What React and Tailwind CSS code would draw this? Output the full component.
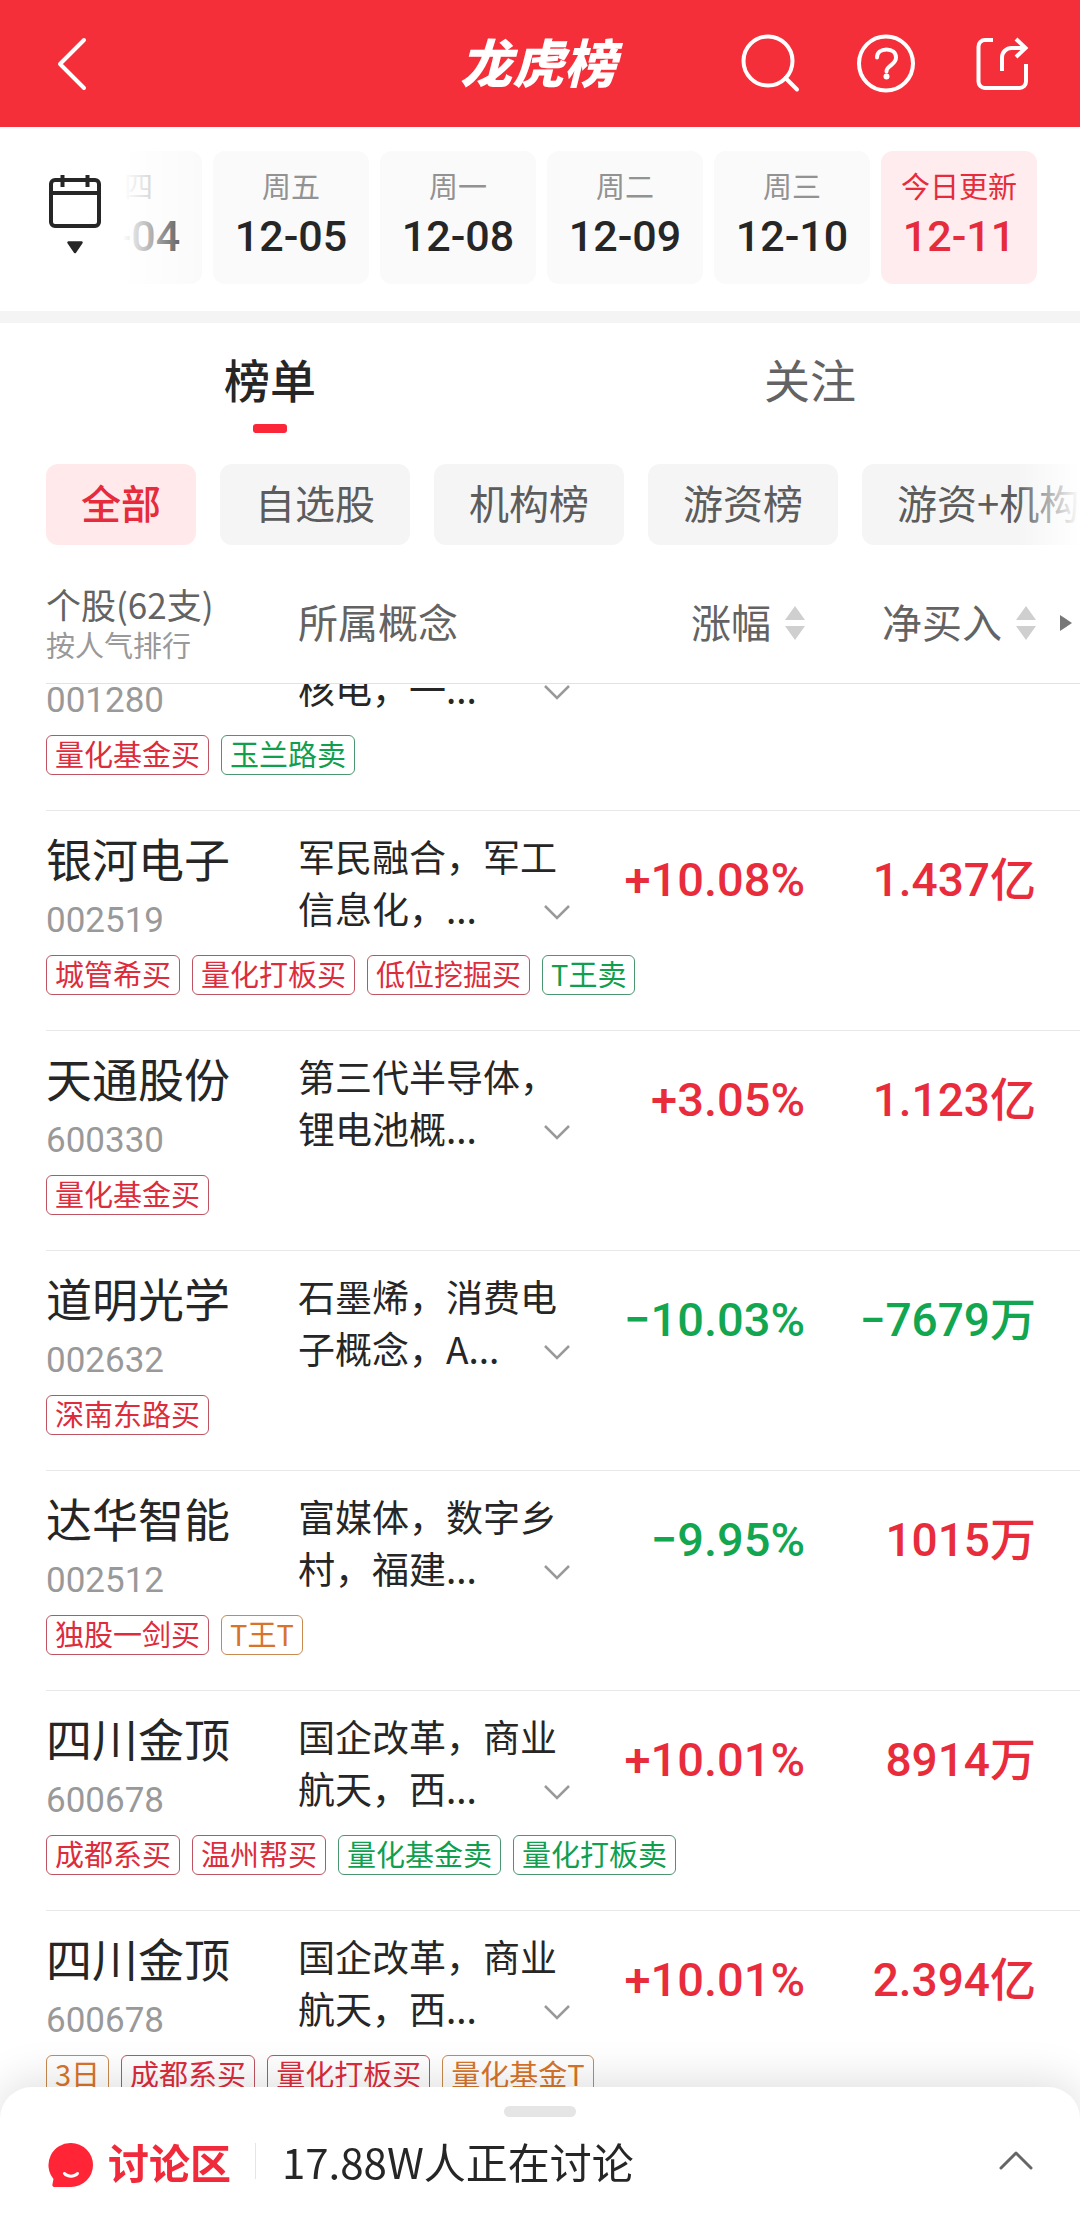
import { useLayoutEffect, useRef, useState } from 'react';
import clsx from 'clsx';

const DATES = [
  { week: '周四', date: '12-04' },
  { week: '周五', date: '12-05' },
  { week: '周一', date: '12-08' },
  { week: '周二', date: '12-09' },
  { week: '周三', date: '12-10' },
  { week: '今日更新', date: '12-11' },
];

const FILTERS = ['全部', '自选股', '机构榜', '游资榜', '游资+机构'];

const STOCKS = [
  {
    code: '001280',
    concepts: ['', '核电，一...'],
    tags: [['量化基金买', 'buy'], ['玉兰路卖', 'sell']],
  },
  {
    name: '银河电子',
    code: '002519',
    concepts: ['军民融合，军工', '信息化，...'],
    change: '+10.08%',
    net: '1.437亿',
    tags: [['城管希买', 'buy'], ['量化打板买', 'buy'], ['低位挖掘买', 'buy'], ['T王卖', 'sell']],
  },
  {
    name: '天通股份',
    code: '600330',
    concepts: ['第三代半导体，', '锂电池概...'],
    change: '+3.05%',
    net: '1.123亿',
    tags: [['量化基金买', 'buy']],
  },
  {
    name: '道明光学',
    code: '002632',
    concepts: ['石墨烯，消费电', '子概念，A...'],
    change: '−10.03%',
    net: '−7679万',
    tags: [['深南东路买', 'buy']],
  },
  {
    name: '达华智能',
    code: '002512',
    concepts: ['富媒体，数字乡', '村，福建...'],
    change: '−9.95%',
    net: '1015万',
    tags: [['独股一剑买', 'buy'], ['T王T', 'both']],
  },
  {
    name: '四川金顶',
    code: '600678',
    concepts: ['国企改革，商业', '航天，西...'],
    change: '+10.01%',
    net: '8914万',
    tags: [['成都系买', 'buy'], ['温州帮买', 'buy'], ['量化基金卖', 'sell'], ['量化打板卖', 'sell']],
  },
  {
    name: '四川金顶',
    code: '600678',
    concepts: ['国企改革，商业', '航天，西...'],
    change: '+10.01%',
    net: '2.394亿',
    tags: [['3日', 'both'], ['成都系买', 'buy'], ['量化打板买', 'buy'], ['量化基金T', 'both']],
  },
];

const TAG_STYLES = {
  buy: 'border-[#be5462] text-[#dd2c3c]',
  sell: 'border-[#4a9670] text-[#0f9f4f]',
  both: 'border-[#c98a50] text-[#d8742a]',
};

const NUM_FONT = "font-[Roboto,'Noto_Sans_CJK_SC',sans-serif]";

function TopBar() {
  return (
    <header className="grid h-[127px] shrink-0 grid-cols-[1fr_auto_1fr] items-center bg-[#f42f39] px-12 text-white">
      <button type="button" aria-label="返回" className="w-14">
        <svg className="h-[60px] w-14" viewBox="0 0 56 60" fill="none" stroke="currentColor" strokeWidth="4" strokeLinecap="round" strokeLinejoin="round">
          <path d="M36 6 12 30 36 54" />
        </svg>
      </button>
      <h1 className="pr-1 pb-[6px] text-[52px] leading-[60px] font-black italic">龙虎榜</h1>
      <div className="flex justify-end gap-14">
        <button type="button" aria-label="搜索">
          <svg className="size-[60px]" viewBox="0 0 60 60" fill="none" stroke="currentColor" strokeWidth="4" strokeLinecap="round">
            <circle cx="28" cy="27" r="24.500" />
            <path d="m45.500 44 11.500 11.500" />
          </svg>
        </button>
        <button type="button" aria-label="帮助">
          <svg className="size-[60px]" viewBox="0 0 60 60" fill="none" stroke="currentColor" strokeWidth="4" strokeLinecap="round">
            <circle cx="30" cy="29.500" r="27" />
            <path d="M21 23.500C21 18.500 25 15.500 30.500 15.500s9.500 3 9.500 8c0 4.500-3 6-6 8.500-2.500 2-3.500 3-3.500 5.500" />
            <circle cx="30.500" cy="42.500" r="3" fill="currentColor" stroke="none" />
          </svg>
        </button>
        <button type="button" aria-label="分享">
          <svg className="size-[60px]" viewBox="0 0 60 60" fill="none" stroke="currentColor" strokeWidth="4">
            <path d="M21 6h-8a6.500 6.500 0 0 0-6.500 6.500v35A6.500 6.500 0 0 0 13 54h34.500a6.500 6.500 0 0 0 6.500-6.500V30" />
            <path d="M30 37V23.500a9.500 9.500 0 0 1 9.500-9.500h14" />
            <path d="m44 5 9.500 9-9.500 9" />
          </svg>
        </button>
      </div>
    </header>
  );
}

function DateStrip() {
  const [active, setActive] = useState('12-11');

  return (
    <nav className="flex shrink-0 items-center pt-6 pr-[43px] pb-[27px] pl-[47px]">
      <button type="button" aria-label="选择日期" className="pb-[6px] text-[#262626]">
        <svg className="h-[84px] w-14" viewBox="0 0 56 84" fill="none" stroke="currentColor" strokeWidth="4">
          <rect x="4" y="7" width="48" height="46" rx="4" />
          <path d="M4 20h48M15.500 2v12M40.500 2v12" />
          <path d="M21.500 69.500h13L28 79z" fill="currentColor" strokeWidth="2.500" strokeLinejoin="round" />
        </svg>
      </button>
      <div className="relative ml-5 flex min-w-0 flex-1 justify-end gap-[11px] overflow-hidden">
        {DATES.map(({ week, date }) => (
          <button
            key={date}
            type="button"
            onClick={() => setActive(date)}
            className={clsx(
              'flex h-[133px] w-[156px] shrink-0 flex-col items-center rounded-xl pt-[14px]',
              date === active ? 'bg-[#feecee] text-[#e62c3c]' : 'bg-[#fafafa] text-[#262626]'
            )}
          >
            <span className={clsx('text-[29px] leading-10', date !== active && 'text-[#929292]')}>
              {week}
            </span>
            <span className={clsx('mt-1 text-[43px] leading-[54px] font-medium', NUM_FONT)}>
              {date}
            </span>
          </button>
        ))}
        <div className="pointer-events-none absolute inset-y-0 left-0 w-20 bg-linear-to-r from-white to-transparent" />
      </div>
    </nav>
  );
}

function Tabs() {
  const [active, setActive] = useState('榜单');

  return (
    <div role="tablist" className="flex shrink-0 border-t-12 border-[#f4f4f4]">
      {['榜单', '关注'].map((tab) => (
        <button
          key={tab}
          type="button"
          role="tab"
          aria-selected={tab === active}
          onClick={() => setActive(tab)}
          className="flex flex-1 flex-col items-center pt-7"
        >
          <span
            className={clsx(
              'text-[46px] leading-[54px]',
              tab === active ? 'font-medium text-[#262626]' : 'text-[#636363]'
            )}
          >
            {tab}
          </span>
          <span
            className={clsx('mt-[19px] h-[9px] w-[34px] rounded-[3px]', tab === active && 'bg-[#fb2637]')}
          />
        </button>
      ))}
    </div>
  );
}

function Filters() {
  const [active, setActive] = useState('全部');

  return (
    <div className="relative mt-[31px] flex shrink-0 gap-6 overflow-hidden pl-[46px]">
      {FILTERS.map((label) => (
        <button
          key={label}
          type="button"
          onClick={() => setActive(label)}
          className={clsx(
            'h-[81px] shrink-0 rounded-xl px-[35px] pb-[6px] text-[40px] leading-[60px]',
            label === active
              ? 'bg-[#ffe9eb] font-medium text-[#e62c3c]'
              : 'bg-[#f5f5f5] text-[#5c5c5c]'
          )}
        >
          {label}
        </button>
      ))}
      <div className="pointer-events-none absolute inset-y-0 right-0 w-16 bg-linear-to-l from-white to-transparent" />
    </div>
  );
}

function SortButton({ label }) {
  return (
    <button type="button" className="inline-flex items-center gap-[14px] leading-10">
      {label}
      <svg className="mt-1 h-[34px] w-5" viewBox="0 0 20 34" fill="#cfcfcf">
        <path d="m10 0 10 14H0zM10 34 0 20h20z" />
      </svg>
    </button>
  );
}

function StockRows({ stock }) {
  const { name, code, concepts, change, net, tags } = stock;

  return (
    <tbody>
      <tr className="align-top">
        <td className="pt-[18px]">
          <div className="h-14 text-[46px] leading-14 text-[#262626]">{name}</div>
          <div className={clsx('mt-[14px] text-[35px] leading-11 text-[#999]', NUM_FONT)}>{code}</div>
        </td>
        <td className="pt-[19px] text-[37px] leading-13 text-[#262626]">
          <div className="h-13">{concepts[0]}</div>
          <div className="flex items-center justify-between pr-px">
            <span>{concepts[1]}</span>
            <button type="button" aria-label="展开概念" className="pt-2">
              <svg className="h-4 w-7" viewBox="0 0 28 16" fill="none" stroke="#999" strokeWidth="2.500">
                <path d="m2 2 12 12L26 2" />
              </svg>
            </button>
          </div>
        </td>
        <td
          className={clsx(
            'pt-[41px] text-right text-[47px] leading-14 font-medium',
            NUM_FONT,
            change?.startsWith('+') ? 'text-[#e92c3c]' : 'text-[#12a650]'
          )}
        >
          {change}
        </td>
        <td
          className={clsx(
            'pt-[41px] pr-11 text-right text-[46px] leading-14 font-medium',
            NUM_FONT,
            net?.startsWith('−') ? 'text-[#12a650]' : 'text-[#e92c3c]'
          )}
        >
          {net}
        </td>
      </tr>
      <tr>
        <td colSpan={4} className="border-b border-[#e8e8e8] pt-3 pb-[35px]">
          <div className="flex gap-3">
            {tags.map(([label, kind]) => (
              <span
                key={label}
                className={clsx(
                  'h-10 rounded-md border px-2 text-[29px] leading-[34px]',
                  TAG_STYLES[kind]
                )}
              >
                {label}
              </span>
            ))}
          </div>
        </td>
      </tr>
    </tbody>
  );
}

function StockTable() {
  const scroller = useRef(null);

  // open part-way down the list
  useLayoutEffect(() => {
    scroller.current.scrollTop = 93;
  }, []);

  return (
    <main ref={scroller} className="min-h-0 flex-1 overflow-y-auto pl-[46px] [scrollbar-width:none]">
      <table className="w-full table-fixed border-separate border-spacing-0">
        <colgroup>
          <col className="w-[252px]" />
          <col className="w-[274px]" />
          <col />
          <col className="w-[275px]" />
        </colgroup>
        <thead className="sticky top-0 z-10 bg-white text-[40px] text-[#636363]">
          <tr className="*:h-[139px] *:border-b *:border-[#e2e2e2] *:pt-[14px] *:font-normal">
            <th className="text-left">
              <div className="pt-[6px] text-[35px] leading-10">个股(62支)</div>
              <div className="text-[29px] leading-10 text-[#999]">按人气排行</div>
            </th>
            <th className="text-left leading-10">所属概念</th>
            <th className="text-right">
              <SortButton label="涨幅" />
            </th>
            <th className="pr-2">
              <div className="flex items-center justify-end gap-6">
                <SortButton label="净买入" />
                <svg className="mt-1 h-4 w-3" viewBox="0 0 12 16" fill="#777">
                  <path d="M0 0l12 8-12 8z" />
                </svg>
              </div>
            </th>
          </tr>
        </thead>
        {STOCKS.map((stock, i) => (
          <StockRows key={i} stock={stock} />
        ))}
      </table>
    </main>
  );
}

function DiscussionBar() {
  return (
    <footer className="relative z-20 -mt-8 flex shrink-0 flex-col items-center rounded-t-[32px] bg-white px-[46px] pt-[19px] pb-7 shadow-[0_-6px_44px_rgba(0,0,0,0.13)]">
      <div className="h-[11px] w-[72px] rounded-full bg-[#e5e5e5]" />
      <button type="button" className="flex h-[92px] w-full items-center pb-[5px]">
        <svg className="mt-2 h-12 w-12" viewBox="0 0 48 48">
          <path d="M25 2a22 22 0 1 1 0 44H9c-2 0-3-1-2.500-3l1-5A22 22 0 0 1 25 2z" fill="#ff2436" />
          <path d="M18.500 32.500c3 3.500 10 3.500 13 0" fill="none" stroke="#fff" strokeWidth="3" strokeLinecap="round" />
        </svg>
        <span className="ml-[14px] text-[41px] leading-[60px] font-bold text-[#f02a3a]">讨论区</span>
        <span className="ml-6 h-9 w-px bg-[#e5e5e5]" />
        <span className="ml-[26px] text-[42px] leading-[60px] text-[#262626]">17.88W人正在讨论</span>
        <svg className="ml-auto h-5 w-9" viewBox="0 0 36 20" fill="none" stroke="#666" strokeWidth="3" strokeLinecap="round" strokeLinejoin="round">
          <path d="M3 17 18 2l15 15" />
        </svg>
      </button>
    </footer>
  );
}

export default function App() {
  return (
    <div className="flex h-screen flex-col overflow-hidden bg-white font-['Noto_Sans_CJK_SC',sans-serif]">
      <TopBar />
      <DateStrip />
      <Tabs />
      <Filters />
      <StockTable />
      <DiscussionBar />
    </div>
  );
}
